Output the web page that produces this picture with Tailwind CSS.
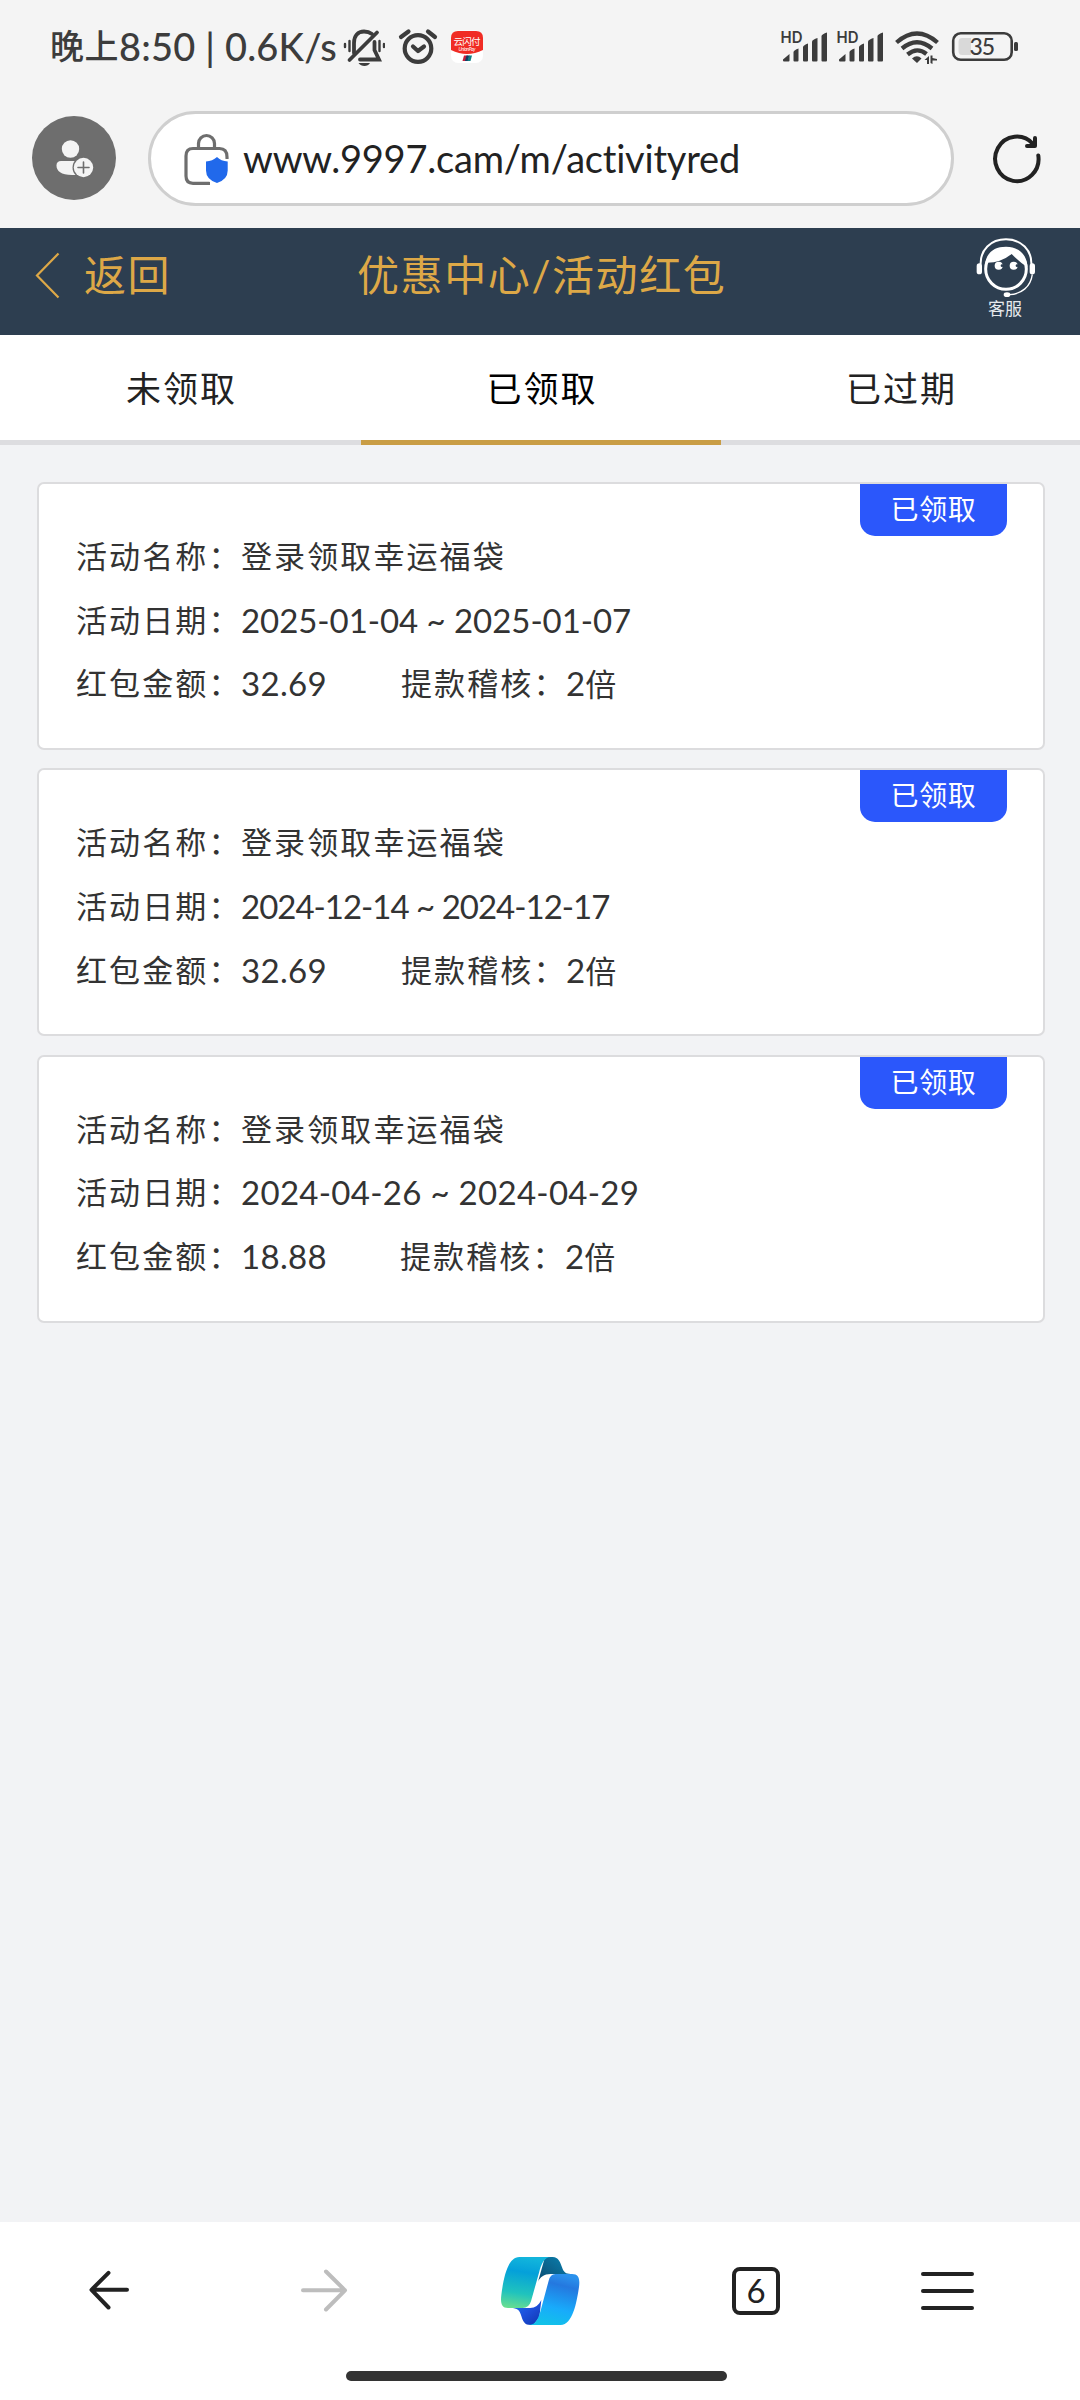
<!DOCTYPE html>
<html lang="zh-CN">
<head>
<meta charset="utf-8">
<title>优惠中心/活动红包</title>
<script src="https://cdn.jsdelivr.net/npm/@tailwindcss/browser@4"></script>
</head>
<body class="w-[1080px] h-[2400px] overflow-hidden flex flex-col bg-[#f2f3f5] font-['Lato','Noto_Sans_CJK_SC',sans-serif] text-[#333]">

<!-- status bar -->
<div class="h-[94px] shrink-0 bg-[#f4f4f4] flex items-center pl-[50px] text-[#3c3c3c]">
  <div class="flex items-center w-[293px] pb-[2px] whitespace-nowrap text-[38px] leading-none font-medium">
    <span class="text-[34px] tracking-[0.5px]">晚上</span><span class="tracking-[0.2px]">8:50 | 0.6K/s</span>
  </div>
  <svg class="w-[42px] h-[40px]" viewBox="343 27 42 40" fill="none" stroke="#3c3c3c" stroke-width="3.8" stroke-linecap="round">
    <path d="M354 53V43C354 36 358 31.500 364 31.500C367 31.500 370 32.500 372 34"/>
    <path d="M349.500 60L377 32.500"/>
    <path d="M374.500 42V50L379 59.500H360"/>
    <path d="M358.500 63H370C368 67 361 67 358.500 63Z" fill="#3c3c3c" stroke="none"/>
    <path d="M345 44V47M349.500 41V51M379.500 41V51M384 44V47" stroke-width="2.400"/>
  </svg>
  <svg class="w-[40px] h-[40px] ml-[13px]" viewBox="398 27 40 40" fill="none" stroke="#3c3c3c" stroke-width="4.200" stroke-linecap="round" stroke-linejoin="round">
    <circle cx="418" cy="48.500" r="13.300"/>
    <path d="M413 46.500L418 51L424 46.500"/>
    <path d="M401 37L408.500 31.500M428 31.500L435 37"/>
  </svg>
  <svg class="w-[32px] h-[34px] ml-[13px]" viewBox="0 0 32 34">
    <rect y="0.500" width="32" height="32.500" rx="7" fill="#fff"/>
    <path d="M0 8Q0 1 7 1H25Q32 1 32 8V20Q16 28 0 20Z" fill="#f02c24"/>
    <text x="2.500" y="15" font-size="9.500" textLength="27" fill="#fff">云闪付</text>
    <text x="7.500" y="20.500" font-size="5" textLength="17" font-style="italic" fill="#fff">UnionPay</text>
    <path d="M13 25.500H17L15.500 31H11.500Z" fill="#c3213c"/><path d="M15.500 25.500H18.500L17 31H14Z" fill="#123d66"/><path d="M18 25.500H21L19.500 31H16.500Z" fill="#0b7f83"/>
  </svg>
  <svg class="w-[240px] h-[40px] ml-[296px]" viewBox="779 27 240 40" fill="#3c3c3c">
    <g id="sig">
      <text x="780.500" y="43.300" font-family="Inter" font-size="15.500" font-weight="600" textLength="22" lengthAdjust="spacingAndGlyphs">HD</text>
      <path d="M783 59.500L789.500 54V60.500Q789.500 61.500 788.500 61.500H784Q783 61.500 783 60.500Z"/>
      <path d="M793.500 52Q794 50 798.500 48.500V60.500Q798.500 61.500 797.500 61.500H794.500Q793.500 61.500 793.500 60.500Z"/>
      <path d="M803 47Q803.500 45 808 43.500V60.500Q808 61.500 807 61.500H804Q803 61.500 803 60.500Z"/>
      <path d="M812 41.500Q812.500 39.500 817.500 38V60.500Q817.500 61.500 816.500 61.500H813Q812 61.500 812 60.500Z"/>
      <path d="M821.500 36Q822 34 827 32.500V60.500Q827 61.500 826 61.500H822.500Q821.500 61.500 821.500 60.500Z"/>
    </g>
    <use href="#sig" x="56"/>
    <g fill="none" stroke="#3c3c3c" stroke-width="4.300">
      <path d="M896.500 42.500Q917 24.500 937.500 42.500"/>
      <path d="M902 48.500Q917 36 932 48.500"/>
      <path d="M907.500 54.500Q917 46.500 926.500 54"/>
    </g>
    <path d="M912 58.500Q917 54 921.500 58.500L917 63Z"/>
    <path d="M924.500 60L929 56V64H927V60ZM930.500 55.500H932.500V58L937 59V60.500H932.500V64L930.500 63Z"/>
    <rect x="953.200" y="33.300" width="58.500" height="26.500" rx="7.500" fill="none" stroke="#3c3c3c" stroke-width="2.600"/>
    <path d="M962 38H971V55H962Q958.500 55 958.500 51V42Q958.500 38 962 38Z" fill="#d9d9d9"/>
    <text x="969.500" y="54.800" font-size="23" font-weight="500" textLength="25.500">35</text>
    <rect x="1014" y="42" width="4" height="9" rx="1.500"/>
  </svg>
</div>

<!-- browser address bar -->
<div class="h-[134px] shrink-0 bg-[#f4f4f4] flex items-start">
  <svg class="w-[84px] h-[84px] ml-8 mt-[22px]" viewBox="0 0 84 84">
    <circle cx="42" cy="42" r="42" fill="#6e6e6e"/>
    <circle cx="38.500" cy="33" r="8.700" fill="#f4f4f4"/>
    <path d="M29 45H46V59H40C29 59 24.500 55 24.500 49.500Q24.500 45 29 45Z" fill="#f4f4f4"/>
    <circle cx="51.500" cy="51.500" r="11" fill="#6e6e6e"/>
    <circle cx="51.500" cy="51.500" r="9.700" fill="#f4f4f4"/>
    <path d="M51.500 46V57M46 51.500H57" stroke="#6e6e6e" stroke-width="1.600" stroke-linecap="round"/>
  </svg>
  <div class="ml-8 mt-[17px] w-[806px] h-[95px] rounded-full border-[3px] border-[#cfcfcf] bg-white flex items-center pl-[32px]">
    <svg class="w-[48px] h-[54px]" viewBox="183 131 48 54">
      <g fill="none" stroke="#6e6e6e" stroke-width="3.200">
        <path d="M198.500 147V142.500A8 8 0 0 1 214.500 142.500V147"/>
        <path d="M210 182.300H193Q186 182.300 186 175V155Q186 147.500 193 147.500H219.500Q227 147.500 227 156V158"/>
      </g>
      <path d="M217 153.500Q222 158 229.500 158.500V170Q229.500 180 217 185Q204.500 180 204.500 170V158.500Q212 158 217 153.500Z" fill="#fff"/>
      <path d="M217 156Q221 160 227.700 160.500V169.500Q227.700 178.500 217 182Q206 178.500 206 169.500V160.500Q212.500 160 217 156Z" fill="#2169eb"/>
    </svg>
    <span class="ml-[12px] pb-[2px] text-[38px] leading-none text-[#222] tracking-[-0.2px]">www.9997.cam/m/activityred</span>
  </div>
  <svg class="w-[52px] h-[52px] ml-[37px] mt-[38px]" viewBox="991 132 52 52" fill="none" stroke="#222" stroke-width="4" stroke-linecap="round" stroke-linejoin="round">
    <path d="M1038.300 155.500A21.700 22.300 0 1 1 1033 144"/>
    <path d="M1035 138V146H1027"/>
  </svg>
</div>

<!-- page header -->
<div class="h-[107px] shrink-0 bg-[#2d3e50] flex text-[42px] leading-[95px] text-[#dda847] tracking-[1.6px]">
  <div class="w-[357px] flex pl-[35px]">
    <svg class="w-[25px] h-[48px] mt-[23px]" viewBox="0 0 25 48" fill="none" stroke="#dda847" stroke-width="2.200"><path d="M23.500 2.500L2 24.500L23.500 46.500"/></svg>
    <span class="ml-[24px]">返回</span>
  </div>
  <h1 class="w-[613px] whitespace-nowrap">优惠中心/活动红包</h1>
  <div class="w-[70px] flex flex-col items-center">
    <svg class="w-[60px] h-[64px] mt-[8px]" viewBox="45 18 180 192" fill="none" stroke="#fff">
      <path d="M62 104C60 60 92 28 138 28S216 60 214 104" stroke-width="6"/>
      <circle cx="138" cy="117" r="61" stroke-width="9"/>
      <path d="M75 110C76 70 100 50 138 50S202 74 202 112Q178 96 155 72Q120 100 75 98Z" fill="#fff" stroke="none"/>
      <rect x="50" y="100" width="16" height="33" rx="8" fill="#fff" stroke="none"/><rect x="209" y="100" width="16" height="33" rx="8" fill="#fff" stroke="none"/>
      <path d="M217 133C212 170 185 192 148 194" stroke-width="4"/>
      <ellipse cx="141" cy="194" rx="10" ry="7" fill="#fff" stroke="none"/>
      <circle cx="116" cy="107" r="12" fill="#fff" stroke="none"/><circle cx="161" cy="107" r="12" fill="#fff" stroke="none"/>
      <circle cx="126" cy="107" r="4" fill="#2d3e50" stroke="none"/><circle cx="171" cy="107" r="4" fill="#2d3e50" stroke="none"/>
    </svg>
    <span class="text-[17px] leading-[18px] tracking-normal text-[#e6e9ec]">客服</span>
  </div>
</div>

<!-- tabs -->
<div class="h-[110px] shrink-0 grid grid-cols-[361px_360px_359px] bg-white text-center text-[35px] leading-[107px] tracking-[2px] text-[#222]">
  <div class="h-[110px] pl-[2px] border-b-[5px] border-[#dddde0]">未领取</div>
  <div class="h-[110px] pl-[2px] border-b-[5px] border-[#c99d45] text-black">已领取</div>
  <div class="h-[110px] pl-[2px] border-b-[5px] border-[#dddde0]">已过期</div>
</div>

<!-- red packet list -->
<div id="list" class="flex-1 flex flex-col gap-[18.4px] px-[37px] pt-[37px]"></div>

<!-- browser toolbar -->
<div class="h-[178px] shrink-0 bg-white flex flex-col">
  <div class="h-[149px] flex items-start">
    <svg class="w-[44px] h-[44px] ml-[87px] mt-[46px]" viewBox="87 2268 44 44" fill="none" stroke="#222" stroke-width="4" stroke-linecap="round" stroke-linejoin="round"><path d="M127 2289.800H92M108.500 2272.800L91.500 2289.800L108.500 2307.500"/></svg>
    <svg class="w-[52px] h-[48px] ml-[167px] mt-[44px]" viewBox="298 2266 52 48" fill="none" stroke="#bdbdbd" stroke-width="4" stroke-linecap="round" stroke-linejoin="round"><path d="M303 2290.300H345M326 2271.500L345 2290.300L326 2309.500"/></svg>
    <svg class="w-[80px] h-[70px] ml-[150px] mt-[34px]" viewBox="60 48 240 210">
      <defs>
        <linearGradient id="gl" x1="0.400" y1="0" x2="0.250" y2="1"><stop offset="0" stop-color="#12b5dc"/><stop offset=".28" stop-color="#04a0da"/><stop offset=".7" stop-color="#20c3bd"/><stop offset="1" stop-color="#67dd91"/></linearGradient>
        <linearGradient id="gr" x1="0.600" y1="0" x2="0.350" y2="1"><stop offset="0" stop-color="#2b91ec"/><stop offset=".2" stop-color="#2478df"/><stop offset=".65" stop-color="#18abfb"/><stop offset="1" stop-color="#12c2e8"/></linearGradient>
        <linearGradient id="gt" x1="0" y1="1" x2="1" y2="0"><stop offset="0" stop-color="#0a4a70"/><stop offset="1" stop-color="#0b83b2"/></linearGradient>
        <linearGradient id="gb" x1="0" y1="0" x2="1" y2="1"><stop offset="0" stop-color="#1b7bf0"/><stop offset=".5" stop-color="#1d50dc"/><stop offset="1" stop-color="#0f34ae"/></linearGradient>
      </defs>
      <path d="M195 51H218C236 51 241 68 246 82C251 97 258 102 272 102H212C192 102 180 112 174 125Z" fill="url(#gt)"/>
      <path d="M92 204H150C166 204 176 196 184 180L178 232L160 255H152C134 255 129 245 124 228C119 210 112 204 92 204Z" fill="url(#gb)"/>
      <path d="M118 51H213C192 51 184 72 177 98L153 184Q147 204 128 204H84C64 204 61 188 64 165C70 118 82 51 118 51Z" fill="url(#gl)"/>
      <path d="M226 102H276C297 102 300 118 297 141C290 188 278 255 242 255H147C168 255 176 234 183 208L206 122Q211 102 226 102Z" fill="url(#gr)"/>
    </svg>
    <div class="ml-[152px] mt-[45px] w-[48px] h-[48px] pb-[1px] border-4 border-[#222] rounded-[8px] flex items-center justify-center text-[33px] leading-none text-[#222]">6</div>
    <div class="ml-[141px] mt-[50px] w-[53px] h-[38px] flex flex-col justify-between">
      <i class="h-1 rounded-full bg-[#222]"></i><i class="h-1 rounded-full bg-[#222]"></i><i class="h-1 rounded-full bg-[#222]"></i>
    </div>
  </div>
  <div class="w-[381px] h-[10px] ml-[346px] rounded-full bg-[#333]"></div>
</div>

<script>
const rows = [
  ["2025-01-04 ~ 2025-01-07", "32.69", "tracking-[-0.05px]", "w-[160px]"],
  ["2024-12-14 ~ 2024-12-17", "32.69", "tracking-[-1px]", "w-[160px]"],
  ["2024-04-26 ~ 2024-04-29", "18.88", "tracking-[0.3px]", "w-[159px]"],
];
document.getElementById("list").innerHTML = rows.map(([date, amount, track, width]) => `
  <section class="w-[1008px] h-[268px] shrink-0 bg-white border-2 border-[#dcdcde] rounded-[7px] flex justify-between pl-[37px] pr-[36px]">
    <div class="pt-[41px] text-[31px] leading-[63.7px] tracking-[2.1px] whitespace-nowrap">
      <div class="flex"><span class="w-[165px]">活动名称：</span><span>登录领取幸运福袋</span></div>
      <div class="flex"><span class="w-[165px]">活动日期：</span><span class="text-[33px] ${track}">${date}</span></div>
      <div class="flex"><span class="w-[165px]">红包金额：</span><span class="${width} text-[33px] tracking-[0.3px]">${amount}</span><span class="w-[165px]">提款稽核：</span><span><span class="text-[33px] tracking-[0px]">2</span>倍</span></div>
    </div>
    <div class="w-[147px] h-[52px] rounded-b-[15px] bg-[#2b57fb] text-white text-center text-[28px] leading-[50px] tracking-[0.6px]">已领取</div>
  </section>`).join("");
</script>
</body>
</html>
